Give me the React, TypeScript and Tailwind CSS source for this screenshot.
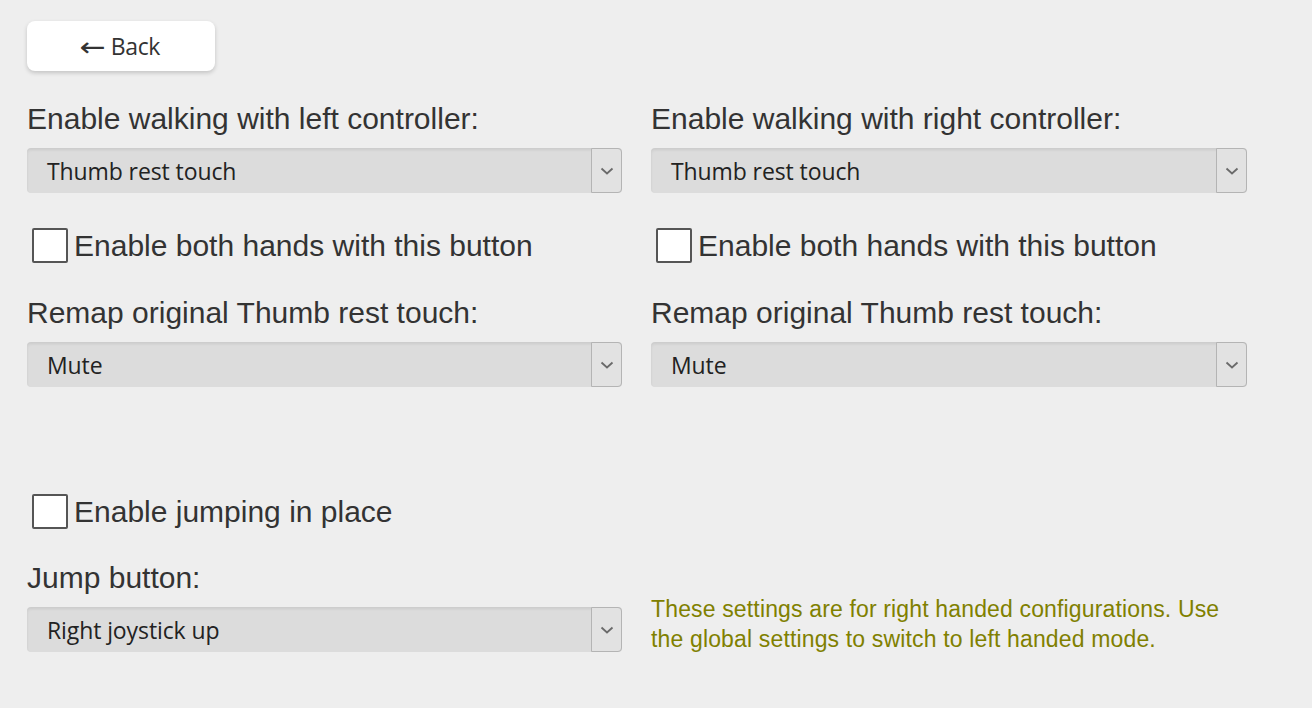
import { useState } from "react";

function Select({ value }: { value: string }) {
  return (
    <div className="flex h-[45px] w-full rounded-[4px] bg-[#dcdcdc] shadow-[inset_0_2px_3px_rgba(0,0,0,0.08)]">
      <div className="flex flex-1 items-center pl-[20px] pt-[2px] text-[23px] text-[#222] font-['Open_Sans',sans-serif]">
        <span className="tracking-[-0.1px]">{value}</span>
      </div>
      <div className="flex w-[31px] items-center justify-center rounded-r-[4px] border border-[#b4b4b4] bg-[#e2e2e2]">
        <svg width="14" height="8" viewBox="0 0 14 8" fill="none">
          <path d="M1.5 1.5 L7 6.5 L12.5 1.5" stroke="#6a6a6a" strokeWidth="1.8" />
        </svg>
      </div>
    </div>
  );
}

function Check({ label }: { label: string }) {
  const [on, setOn] = useState(false);
  return (
    <label className="flex h-[36px] cursor-pointer items-center" onClick={() => setOn(!on)}>
      <span className="ml-[5px] flex h-[35px] w-[36px] items-center justify-center rounded-[2px] border-[2px] border-[#555] bg-white">
        {on && <span className="text-[22px] leading-none text-[#333]">✓</span>}
      </span>
      <span className="ml-[6px] text-[30px] text-[#333]">{label}</span>
    </label>
  );
}

function Label({ children }: { children: string }) {
  return <div className="h-[30px] text-[30px] leading-[30px] text-[#333]">{children}</div>;
}

export default function App() {
  return (
    <div className="min-h-[708px] bg-[#eeeeee] pl-[27px] pt-[21px] font-['Liberation_Sans',Arial,sans-serif]">
      <button className="flex h-[50px] w-[188px] items-center justify-center rounded-[8px] bg-white text-[#333] shadow-[0_2px_4px_rgba(0,0,0,0.18)]">
        <span className="mr-[7px] mt-[2px] text-[26px] leading-none font-['DejaVu_Sans',sans-serif] scale-x-[1.2]">←</span>
        <span className="text-[23px] tracking-[-0.4px] font-['Open_Sans',sans-serif]">Back</span>
      </button>

      <div className="grid w-[1220px] grid-cols-[595px_596px] gap-x-[29px]">
        <div className="mt-[33px]">
          <Label>Enable walking with left controller:</Label>
        </div>
        <div className="mt-[33px]">
          <Label>Enable walking with right controller:</Label>
        </div>

        <div className="mt-[14px]">
          <Select value="Thumb rest touch" />
        </div>
        <div className="mt-[14px]">
          <Select value="Thumb rest touch" />
        </div>

        <div className="mt-[34px]">
          <Check label="Enable both hands with this button" />
        </div>
        <div className="mt-[34px]">
          <Check label="Enable both hands with this button" />
        </div>

        <div className="mt-[35px]">
          <Label>Remap original Thumb rest touch:</Label>
        </div>
        <div className="mt-[35px]">
          <Label>Remap original Thumb rest touch:</Label>
        </div>

        <div className="mt-[14px]">
          <Select value="Mute" />
        </div>
        <div className="mt-[14px]">
          <Select value="Mute" />
        </div>

        <div className="col-span-2 mt-[106px]">
          <Check label="Enable jumping in place" />
        </div>

        <div className="mt-[34px]">
          <Label>Jump button:</Label>
          <div className="mt-[14px]">
            <Select value="Right joystick up" />
          </div>
        </div>
        <div className="mt-[65px] text-[23px] leading-[30px] tracking-[0.15px] text-[#808000]">
          These settings are for right handed configurations. Use the global settings to switch to left handed mode.
        </div>
      </div>
    </div>
  );
}
